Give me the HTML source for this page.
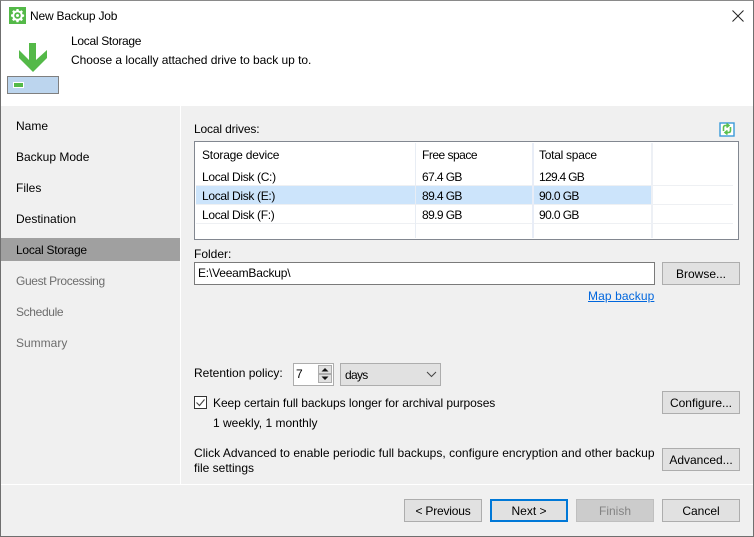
<!DOCTYPE html>
<html><head><meta charset="utf-8"><style>
html,body{margin:0;padding:0}
body{width:754px;height:537px;position:relative;overflow:hidden;background:#f0f0f0;font-family:"Liberation Sans",sans-serif;font-size:12px;color:#000}
.a,.t,.b{position:absolute}
.t{white-space:nowrap;line-height:16px;height:16px}
.g{color:#6d6d6d}
.b{box-sizing:border-box;height:23px;width:78px;background:#e1e1e1;border:1px solid #adadad;text-align:center;line-height:20px;padding-top:1px}
</style></head><body>
<!-- window -->
<div class="a" style="left:1px;top:1px;width:752px;height:105px;background:#fff"></div>
<div class="a" style="left:180px;top:106px;width:1px;height:378px;background:#fff"></div>
<div class="a" style="left:1px;top:484px;width:752px;height:1px;background:#fff"></div>
<div class="a" style="left:0;top:0;width:754px;height:537px;box-sizing:border-box;border:1px solid #6f6f6f;border-top-color:#8a8a8a"></div>
<!-- title -->
<svg class="a" style="left:9px;top:7px" width="17" height="17" viewBox="0 0 17 17"><rect width="17" height="17" fill="#54b948"/><path d="M7.500 2h2l.4 1.600 1.200.5 1.400-.9 1.400 1.400-.9 1.400.5 1.200 1.600.4v2l-1.600.4-.5 1.200.9 1.400-1.400 1.400-1.400-.9-1.200.5-.4 1.600h-2l-.4-1.600-1.200-.5-1.400.9-1.400-1.400.9-1.400-.5-1.200L2 9.500v-2l1.600-.4.5-1.200-.9-1.400 1.400-1.400 1.400.9 1.200-.5z" fill="#fff"/><circle cx="8.500" cy="8.500" r="3.300" fill="#54b948"/><circle cx="8.500" cy="8.500" r="1.500" fill="#fff"/></svg>
<div class="t" style="left:30px;top:8px;letter-spacing:-.2px">New Backup Job</div>
<svg class="a" style="left:732px;top:10px" width="12" height="12" viewBox="0 0 12 12"><path d="M.5 .5l11 11M11.500 .5l-11 11" stroke="#222" stroke-width="1" fill="none"/></svg>
<!-- header -->
<svg class="a" style="left:19px;top:43px" width="28" height="29" viewBox="0 0 28 29"><path d="M10 0h7v17L28 7v8L14 29 0 15V7l10 10z" fill="#54b948"/></svg>
<div class="a" style="left:7px;top:76px;width:52px;height:18px;box-sizing:border-box;border:1px solid #7f7f7f;background:#bcd5ee"></div>
<div class="a" style="left:13px;top:82px;width:11px;height:6px;box-sizing:border-box;border:1px solid #fff;background:#54b948"></div>
<div class="t" style="left:71px;top:33px;letter-spacing:-.3px">Local Storage</div>
<div class="t" style="left:71px;top:52px;letter-spacing:-.04px">Choose a locally attached drive to back up to.</div>
<!-- sidebar -->
<div class="a" style="left:1px;top:238px;width:179px;height:23px;background:#a0a0a0"></div>
<div class="t" style="left:16px;top:118px">Name</div>
<div class="t" style="left:16px;top:149px">Backup Mode</div>
<div class="t" style="left:16px;top:180px">Files</div>
<div class="t" style="left:16px;top:211px">Destination</div>
<div class="t" style="left:16px;top:242px;letter-spacing:-.25px">Local Storage</div>
<div class="t g" style="left:16px;top:273px;letter-spacing:-.37px">Guest Processing</div>
<div class="t g" style="left:16px;top:304px;letter-spacing:-.35px">Schedule</div>
<div class="t g" style="left:16px;top:335px">Summary</div>
<!-- drives -->
<div class="t" style="left:194px;top:121px;letter-spacing:-.15px">Local drives:</div>
<svg class="a" style="left:719px;top:121px" width="16" height="16" viewBox="0 0 16 16"><rect x="1" y="2" width="14" height="13" fill="#fff" stroke="#3a9ad9" stroke-width="1.400"/><path d="M4.500 10V6.500Q4.500 4.500 6.500 4.500H9M7.500 2.500L10 4.500 7.500 6.500M11.500 6v3.500Q11.500 11.500 9.500 11.500H7M8.500 9.500L6 11.500 8.500 13.500" stroke="#5cc04f" stroke-width="1.600" fill="none"/></svg>
<div class="a" style="left:194px;top:141px;width:545px;height:99px;box-sizing:border-box;border:1px solid #828790;background:#fff"></div>
<div class="a" style="left:196px;top:185px;width:537px;height:1px;background:#eef0f3"></div>
<div class="a" style="left:196px;top:204px;width:537px;height:1px;background:#eef0f3"></div>
<div class="a" style="left:196px;top:223px;width:537px;height:1px;background:#eef0f3"></div>
<div class="a" style="left:196px;top:186px;width:456px;height:18px;background:#cce4fb"></div>
<div class="a" style="left:415px;top:143px;width:1px;height:95px;background:#e8edf4"></div>
<div class="a" style="left:532px;top:143px;width:2px;height:95px;background:#e8edf7"></div>
<div class="a" style="left:651px;top:143px;width:2px;height:95px;background:#edf0f5"></div>
<div class="t" style="left:202px;top:147px;letter-spacing:-.2px">Storage device</div>
<div class="t" style="left:422px;top:147px;letter-spacing:-.5px">Free space</div>
<div class="t" style="left:539px;top:147px;letter-spacing:-.27px">Total space</div>
<div class="t" style="left:202px;top:169px;letter-spacing:-.33px">Local Disk (C:)</div>
<div class="t" style="left:422px;top:169px;letter-spacing:-.6px">67.4 GB</div>
<div class="t" style="left:539px;top:169px;letter-spacing:-.7px">129.4 GB</div>
<div class="t" style="left:202px;top:188px;letter-spacing:-.33px">Local Disk (E:)</div>
<div class="t" style="left:422px;top:188px;letter-spacing:-.6px">89.4 GB</div>
<div class="t" style="left:539px;top:188px;letter-spacing:-.6px">90.0 GB</div>
<div class="t" style="left:202px;top:207px;letter-spacing:-.33px">Local Disk (F:)</div>
<div class="t" style="left:422px;top:207px;letter-spacing:-.6px">89.9 GB</div>
<div class="t" style="left:539px;top:207px;letter-spacing:-.6px">90.0 GB</div>
<!-- folder -->
<div class="t" style="left:194px;top:246px">Folder:</div>
<div class="a" style="left:194px;top:262px;width:461px;height:23px;box-sizing:border-box;border:1px solid #7a7a7a;background:#fff"></div>
<div class="t" style="left:198px;top:265px;letter-spacing:-.2px">E:\VeeamBackup\</div>
<div class="b" style="left:662px;top:262px">Browse...</div>
<div class="t" style="left:588px;top:288px;color:#0066dd;text-decoration:underline;letter-spacing:.1px">Map backup</div>
<!-- retention -->
<div class="t" style="left:194px;top:365px">Retention policy:</div>
<div class="a" style="left:293px;top:363px;width:41px;height:23px;box-sizing:border-box;border:1px solid #adadad;background:#fff"></div>
<div class="t" style="left:296px;top:366px">7</div>
<div class="a" style="left:318px;top:365px;width:14px;height:9px;box-sizing:border-box;border:1px solid #adadad;background:#e1e1e1"></div>
<div class="a" style="left:318px;top:374px;width:14px;height:9px;box-sizing:border-box;border:1px solid #adadad;background:#e1e1e1"></div>
<svg class="a" style="left:318px;top:365px" width="14" height="18" viewBox="0 0 14 18"><path d="M7 3L10.500 6.500h-7zM3.500 11.500h7L7 15z" fill="#111"/></svg>
<div class="a" style="left:340px;top:363px;width:101px;height:23px;box-sizing:border-box;border:1px solid #adadad;background:#e1e1e1"></div>
<div class="t" style="left:345px;top:367px;letter-spacing:-.7px">days</div>
<svg class="a" style="left:426px;top:371px" width="11" height="7" viewBox="0 0 11 7"><path d="M1 1l4.500 4.500L10 1" stroke="#444" fill="none"/></svg>
<div class="a" style="left:194px;top:396px;width:13px;height:13px;box-sizing:border-box;border:1px solid #333;background:#fff"></div>
<svg class="a" style="left:194px;top:396px" width="13" height="13" viewBox="0 0 13 13"><path d="M2.500 6.500l3 3 5-6" stroke="#444" stroke-width="1.100" fill="none"/></svg>
<div class="t" style="left:213px;top:395px;letter-spacing:-.06px">Keep certain full backups longer for archival purposes</div>
<div class="b" style="left:662px;top:391px">Configure...</div>
<div class="t" style="left:213px;top:415px">1 weekly, 1 monthly</div>
<div class="t" style="left:194px;top:445px;letter-spacing:.035px">Click Advanced to enable periodic full backups, configure encryption and other backup</div>
<div class="t" style="left:194px;top:460px">file settings</div>
<div class="b" style="left:662px;top:448px">Advanced...</div>
<!-- footer -->
<div class="b" style="left:404px;top:499px;letter-spacing:-.2px">&lt; Previous</div>
<div class="b" style="left:490px;top:499px;border:2px solid #0078d7;line-height:18px;padding-top:1px">Next &gt;</div>
<div class="b" style="left:576px;top:499px;background:#cccccc;border-color:#bfbfbf;color:#838383">Finish</div>
<div class="b" style="left:662px;top:499px">Cancel</div>
</body></html>
